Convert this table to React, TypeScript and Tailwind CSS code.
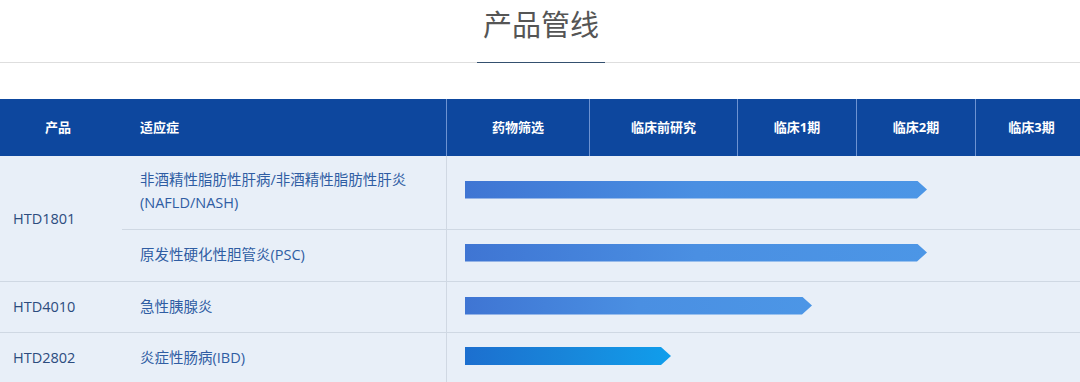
const font = { fontFamily: '"Open Sans", "Noto Sans CJK SC", sans-serif' };

const stages = [
  { name: '药物筛选', w: 'w-[143px]' },
  { name: '临床前研究', w: 'w-[148px]' },
  { name: '临床1期', w: 'w-[119px]' },
  { name: '临床2期', w: 'w-[119px]' },
  { name: '临床3期', w: 'w-[112px]' },
];

// bar arrow
function Bar({ width, cyan }: { width: number; cyan?: boolean }) {
  return (
    <div
      className={
        'h-[18px] [clip-path:polygon(0_0,calc(100%-10px)_0,100%_50%,calc(100%-10px)_100%,0_100%)] ' +
        (cyan
          ? 'bg-gradient-to-r from-[#1c6fcf] via-[#1886da] to-[#0f9eec]'
          : 'bg-gradient-to-r from-[#3f75d3] via-[#4a8fe2] to-[#4c96e6]')
      }
      style={{ width }}
    />
  );
}

function StageCell({ width, cyan, className }: { width: number; cyan?: boolean; className?: string }) {
  return (
    <div className={'flex-1 flex items-center pl-[18px] border-l border-[#d0d8e3] ' + (className ?? '')}>
      <Bar width={width} cyan={cyan} />
    </div>
  );
}

export default function App() {
  return (
    <div className="w-[1080px] h-[382px] overflow-hidden bg-white" style={font}>
      {/* title */}
      <div className="h-[63px] flex justify-center border-b border-[#dedede]">
        <div className="w-[128px] -mb-px ml-[2px] border-b border-[#34506f] flex justify-center pt-[4px]">
          <span className="text-[29px] leading-[42px] text-[#555555]">产品管线</span>
        </div>
      </div>

      <div className="mt-[36px] w-[1090px]">
        {/* header */}
        <div className="h-[57px] flex bg-[#0d479e] text-white text-[13px] font-bold">
          <div className="w-[122px] flex items-center pl-[45px]">产品</div>
          <div className="w-[324px] flex items-center pl-[18px]">适应症</div>
          {stages.map((s) => (
            <div key={s.name} className={s.w + ' flex items-center justify-center border-l border-[#6d93d2]'}>
              {s.name}
            </div>
          ))}
        </div>

        {/* body */}
        <div className="bg-[#e8eff8] text-[14.5px] text-[#2c4c7e]">
          <div className="flex h-[126px] border-b border-[#cfd8e3]">
            <div className="w-[122px] flex items-center pl-[13px] pt-px">HTD1801</div>
            <div className="flex-1 flex flex-col">
              <div className="h-[74px] flex border-b border-[#cfd8e3]">
                <div className="w-[324px] flex flex-col justify-center pl-[18px] pb-[3px] leading-[23px] text-[#2f5da3]">
                  <span>非酒精性脂肪性肝病/非酒精性脂肪性肝炎</span>
                  <span>(NAFLD/NASH)</span>
                </div>
                <StageCell width={462} className="pb-[6px]" />
              </div>
              <div className="flex-1 flex">
                <div className="w-[324px] flex items-center pl-[18px] pb-[2px] text-[#2f5da3]">原发性硬化性胆管炎(PSC)</div>
                <StageCell width={462} className="pb-[6px]" />
              </div>
            </div>
          </div>

          <div className="flex h-[51px] border-b border-[#cfd8e3]">
            <div className="w-[122px] flex items-center pl-[13px]">HTD4010</div>
            <div className="w-[324px] flex items-center pl-[18px] text-[#2f5da3]">急性胰腺炎</div>
            <StageCell width={347} className="pb-[3px]" />
          </div>

          <div className="flex h-[60px]">
            <div className="w-[122px] flex items-center pl-[13px] pb-[10px]">HTD2802</div>
            <div className="w-[324px] flex items-center pl-[18px] pb-[10px] text-[#2f5da3]">炎症性肠病(IBD)</div>
            <StageCell width={206} cyan className="pb-[14px]" />
          </div>
        </div>
      </div>
    </div>
  );
}
